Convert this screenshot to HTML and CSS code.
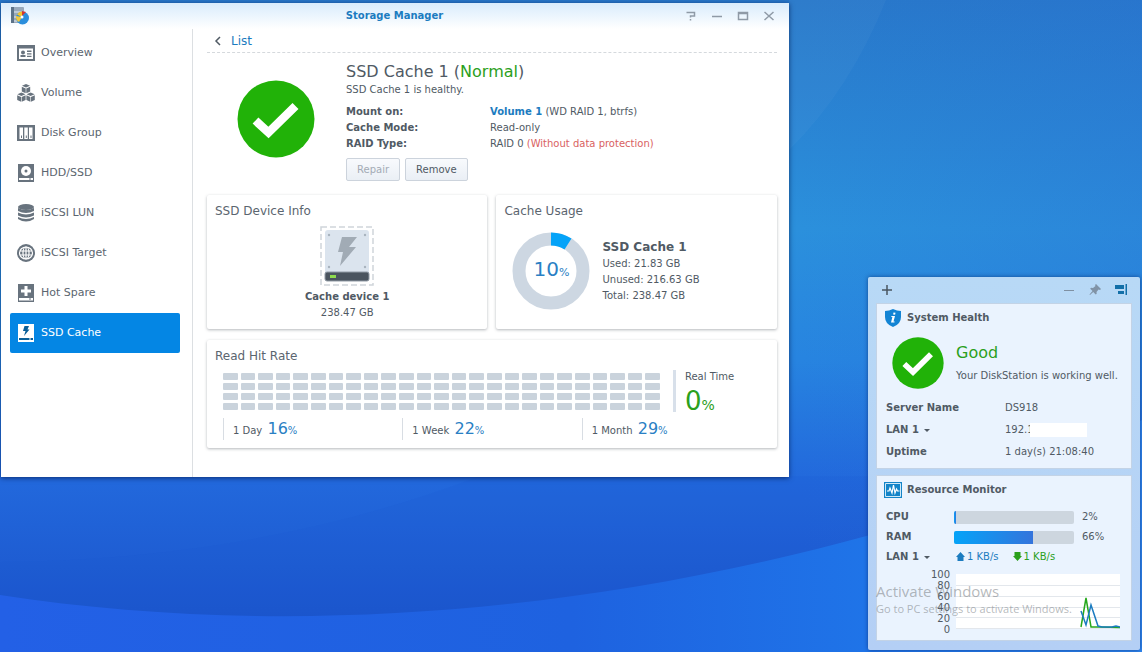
FILE: index.html
```html
<!DOCTYPE html>
<html lang="en">
<head>
    <meta charset="UTF-8">
    <meta name="viewport" content="width=device-width, initial-scale=1.0">
    <title>Storage Manager</title>
    <link rel="stylesheet" href="styles.css">
</head>
<body>
    <svg class="wallpaper" viewBox="0 0 1142 652" preserveAspectRatio="none" aria-hidden="true">
        <defs>
            <linearGradient id="sky" x1="0" y1="0" x2="0" y2="1">
                <stop offset="0" stop-color="#2878ca"/>
                <stop offset="0.35" stop-color="#2b90dc"/>
                <stop offset="0.55" stop-color="#2784e0"/>
                <stop offset="0.74" stop-color="#2268dc"/>
                <stop offset="1" stop-color="#1a50c8"/>
            </linearGradient>
            <linearGradient id="dusk" x1="0" y1="0" x2="1" y2="0">
                <stop offset="0.7" stop-color="#2a70d4" stop-opacity="0"/>
                <stop offset="1" stop-color="#2a70d4" stop-opacity="0.3"/>
            </linearGradient>
            <linearGradient id="front" x1="0" y1="0" x2="1" y2="0">
                <stop offset="0" stop-color="#2360e6"/>
                <stop offset="0.5" stop-color="#1e62e0"/>
                <stop offset="0.76" stop-color="#1f74e8"/>
                <stop offset="1" stop-color="#2f86ee"/>
            </linearGradient>
        </defs>
        <rect width="1142" height="652" fill="url(#sky)"/>
        <rect width="1142" height="652" fill="url(#dusk)"/>
        <path d="M886 0Q850 90 789 150V0z" fill="#fff" opacity="0.03"/>
        <path d="M0 562Q260 560 480 476H870V652H0Z" fill="#1d55d2" opacity="0.15"/>
        <path d="M0 595C260 635 560 620 870 535Q1030 485 1142 420V652H0Z" fill="url(#front)"/>
    </svg>

    <section class="window">
        <header class="titlebar">
            <svg class="app-icon" width="20" height="18" viewBox="0 0 20 18">
                <rect x="1" y="0" width="13" height="16" rx="1" fill="#98a9bb"/>
                <path d="M1 0h3v16H1z" fill="#5d7388"/>
                <path d="M4 5h10M4 10h10M4 14h10" stroke="#e2e9f0"/>
                <circle cx="12.500" cy="11" r="6.500" fill="#2b8edc"/>
                <path d="M12 10L6 9a6 6 0 0 0 3 6z" fill="#f3c83a"/>
                <path d="M12 10V4.500A6 6 0 0 0 7 7.500z" fill="#f4c52c"/>
                <path d="M12 9V4l4 1z" fill="#d6362d"/>
                <circle cx="12" cy="10" r="1.500" fill="#fff"/>
            </svg>
            <h1>Storage Manager</h1>
            <div class="window-buttons">
                <button type="button" aria-label="Help"><svg width="12" height="12" viewBox="0 0 12 12"><path d="M1.500 2.500h8v3.500H5.500v1.500M5.500 9v1.500"/></svg></button>
                <button type="button" aria-label="Minimize"><svg width="12" height="12" viewBox="0 0 12 12"><path d="M1 6.500h10"/></svg></button>
                <button type="button" aria-label="Maximize"><svg width="12" height="12" viewBox="0 0 12 12"><path d="M1.500 2.500h9v7h-9zM1 3.500h10"/></svg></button>
                <button type="button" aria-label="Close"><svg width="12" height="12" viewBox="0 0 12 12"><path d="M1.500 2l9 8M10.500 2l-9 8"/></svg></button>
            </div>
        </header>

        <div class="window-body">
            <nav class="sidebar">
                <a href="#overview">
                    <svg width="18" height="18" viewBox="0 0 18 18"><path d="M0 1h18v16H0z"/><path d="M2 4.500h14V15H2z" fill="#fff"/><circle cx="6" cy="8.500" r="2"/><path d="M3.500 11h5v2h-5zM10 6.500h4.500v1.500H10zM10 9.200h4.500v1.200H10zM10 11.800h4.500v1.200H10z"/></svg>
                    Overview
                </a>
                <a href="#volume">
                    <svg width="18" height="18" viewBox="0 0 18 18"><g id="cube"><path d="M9 0l4 1.800-4 1.800-4-1.800z"/><path d="M4.800 2.700l3.900 1.800v4.700l-3.900-1.800zM13.200 2.700l-3.900 1.800v4.700l3.900-1.800z"/></g><use href="#cube" x="-4.600" y="8.500"/><use href="#cube" x="4.600" y="8.500"/></svg>
                    Volume
                </a>
                <a href="#disk-group">
                    <svg width="18" height="18" viewBox="0 0 18 18"><path d="M0 1h18v16H0z"/><path d="M2.500 3.500h3.500v11.500H2.500zM7.300 3.500h3.500v11.500H7.300zM12 3.500h3.500v11.500H12z" fill="#fff"/><path d="M4 11.500h1v2.500h-1zM8.800 11.500h1v2.500h-1zM13.500 11.500h1v2.500h-1z"/></svg>
                    Disk Group
                </a>
                <a href="#hdd">
                    <svg width="18" height="18" viewBox="0 0 18 18"><path d="M1 0h16v18H1z"/><circle cx="9" cy="7" r="5" fill="#fff"/><circle cx="9" cy="7" r="1.500"/><path d="M2 14h14v2H2z" fill="#fff"/><path d="M12 14.500h2v1h-2z"/></svg>
                    HDD/SSD
                </a>
                <a href="#lun">
                    <svg width="18" height="18" viewBox="0 0 18 18"><ellipse cx="9" cy="3" rx="8" ry="3"/><path d="M1 4q8 4 16 0v3q-8 4-16 0zM1 8.500q8 4 16 0v3q-8 4-16 0zM1 13q8 4 16 0v2q-8 5-16 0z"/></svg>
                    iSCSI LUN
                </a>
                <a href="#target">
                    <svg width="18" height="18" viewBox="0 0 18 18"><circle cx="9" cy="9" r="9"/><g fill="none" stroke="#fff" stroke-width="1.200"><ellipse cx="9" cy="9" rx="6.500" ry="6"/><ellipse cx="9" cy="9" rx="3" ry="6"/><path d="M9 3v12M3 7h12M3 11h12"/></g></svg>
                    iSCSI Target
                </a>
                <a href="#spare">
                    <svg width="18" height="18" viewBox="0 0 18 18"><path d="M1 0h16v18H1z"/><path d="M7.500 2h3v3.500H14v3h-3.500V12h-3V8.500H4v-3h3.500zM2 14h14v2.500H2z" fill="#fff"/><path d="M12 14.500h2v1h-2z"/></svg>
                    Hot Spare
                </a>
                <a href="#cache" class="active">
                    <svg width="18" height="18" viewBox="0 0 18 18"><path d="M1 0h16v18H1z"/><path d="M7.500 2h4.500l-1.500 3.500H12.500L7 12l1.500-5H6zM2 14h14v2H2z" fill="#0a5f98"/><path d="M12 14.500h2v1h-2z"/></svg>
                    SSD Cache
                </a>
            </nav>

            <main class="content">
                <div class="crumb">
                    <svg width="8" height="10" viewBox="0 0 8 10"><path d="M6 1L2 5l4 4" fill="none" stroke="#505a64" stroke-width="1.500"/></svg>
                    <a href="#list">List</a>
                </div>

                <section class="summary">
                    <svg class="status-icon" width="78" height="78" viewBox="0 0 78 78"><circle cx="39" cy="39" r="38.500" fill="#21b208"/><path d="M18.500 40.500l13 12 27-26.500" fill="none" stroke="#fff" stroke-width="8.500"/></svg>
                    <div class="summary-text">
                        <h2>SSD Cache 1 (<span class="green">Normal</span>)</h2>
                        <p>SSD Cache 1 is healthy.</p>
                        <dl>
                            <dt>Mount on:</dt>
                            <dd><a href="#volume">Volume 1</a> (WD RAID 1, btrfs)</dd>
                            <dt>Cache Mode:</dt>
                            <dd>Read-only</dd>
                            <dt>RAID Type:</dt>
                            <dd>RAID 0 <span class="red">(Without data protection)</span></dd>
                        </dl>
                        <div class="buttons">
                            <button type="button" disabled>Repair</button>
                            <button type="button">Remove</button>
                        </div>
                    </div>
                </section>

                <div class="cards">
                    <section class="card device">
                        <h3>SSD Device Info</h3>
                        <svg width="54" height="60" viewBox="0 0 54 60">
                            <rect x="1" y="1" width="52" height="58" fill="none" stroke="#d0d5da" stroke-width="1.500" stroke-dasharray="6 3"/>
                            <rect x="5" y="4" width="44" height="48" rx="3" fill="#dbe4ee"/>
                            <g fill="#a8b3be"><circle cx="9" cy="9" r="1.200"/><circle cx="45" cy="9" r="1.200"/><circle cx="9" cy="41" r="1.200"/><circle cx="45" cy="41" r="1.200"/></g>
                            <path d="M22 11h15l-8 10h7L20 40l3-14h-5z" fill="#a1abb5"/>
                            <rect x="5" y="46" width="44" height="9" rx="2" fill="#4a545f" stroke="#919ba6"/>
                            <rect x="10" y="49" width="6" height="3" fill="#8edb4e"/>
                        </svg>
                        <strong>Cache device 1</strong>
                        <span>238.47 GB</span>
                    </section>

                    <section class="card usage">
                        <h3>Cache Usage</h3>
                        <div class="usage-row">
                            <div class="donut">
                                <svg width="78" height="78" viewBox="0 0 78 78"><circle cx="39" cy="39" r="32" fill="none" stroke="#cdd7e2" stroke-width="13"/><path d="M39 7A32 32 0 0 1 56 12" fill="none" stroke="#05a3f8" stroke-width="13"/></svg>
                                <p class="percent">10<small>%</small></p>
                            </div>
                            <div>
                                <strong>SSD Cache 1</strong>
                                <p>Used: 21.83 GB</p>
                                <p>Unused: 216.63 GB</p>
                                <p>Total: 238.47 GB</p>
                            </div>
                        </div>
                    </section>

                    <section class="card hitrate">
                        <h3>Read Hit Rate</h3>
                        <div class="hit-row">
                            <div class="hit-grid" id="hit-grid"></div>
                            <div class="realtime">
                                <p>Real Time</p>
                                <p class="percent">0<small>%</small></p>
                            </div>
                        </div>
                        <div class="periods">
                            <p>1 Day <span class="percent">16<small>%</small></span></p>
                            <p>1 Week <span class="percent">22<small>%</small></span></p>
                            <p>1 Month <span class="percent">29<small>%</small></span></p>
                        </div>
                    </section>
                </div>
            </main>
        </div>
    </section>

    <aside class="widgets">
        <header class="widget-bar">
            <button type="button" aria-label="Add widget"><svg width="12" height="12" viewBox="0 0 12 12"><path d="M6 1v10M1 6h10" stroke="#4a5560" stroke-width="1.500"/></svg></button>
            <button type="button" class="push" aria-label="Minimize widgets"><svg width="12" height="12" viewBox="0 0 12 12"><path d="M1 6.500h10" stroke="#7f90a2"/></svg></button>
            <button type="button" aria-label="Pin"><svg width="12" height="12" viewBox="0 0 12 12"><path d="M7 0l5 5-1 1-1.500-.5L7.500 8l.2 1.700-1 .8-2.500-2.500L1 11l-.5-.5L3.500 7 1.200 4.800l.8-1 2 .2L6.500 2 6 1z" fill="#8193a6"/></svg></button>
            <button type="button" aria-label="Dock"><svg width="12" height="12" viewBox="0 0 12 12"><path d="M0 1h9v4H0zM3 7h6v3H3zM10.500 0h1.500v11h-1.500z" fill="#126fa8"/></svg></button>
        </header>

        <section class="widget">
            <h2>
                <svg width="18" height="18" viewBox="0 0 18 18"><path d="M9 0q4 2 8 2v6q0 7-8 10Q1 15 1 8V2q4 0 8-2z" fill="#1384d4"/><path d="M9.500 3.500l2 .2-.4 2-2-.2zM7.500 7h3.500l-1.500 5.500h1.200l-.3 1H7l1.400-5.500H7.200z" fill="#fff"/></svg>
                System Health
            </h2>
            <div class="health">
                <svg width="52" height="52" viewBox="0 0 78 78"><circle cx="39" cy="39" r="38.500" fill="#21b208"/><path d="M18.500 40.500l13 12 27-26.500" fill="none" stroke="#fff" stroke-width="8.500"/></svg>
                <div>
                    <h3>Good</h3>
                    <p>Your DiskStation is working well.</p>
                </div>
            </div>
            <dl class="facts">
                <dt>Server Name</dt>
                <dd>DS918</dd>
                <dt><button type="button">LAN 1 <i class="caret"></i></button></dt>
                <dd>192.1<span class="blank"></span></dd>
                <dt>Uptime</dt>
                <dd>1 day(s) 21:08:40</dd>
            </dl>
        </section>

        <section class="widget">
            <h2>
                <svg width="18" height="18" viewBox="0 0 18 18"><path d="M0 1h18v16H0z" fill="#1384c8"/><path d="M1.500 2.500h15v13h-15z" fill="none" stroke="#cfe8f7"/><path d="M3 10h2l1-3 2 5 1.500-8 1.500 8 1.500-4 1 2h2" fill="none" stroke="#fff" stroke-width="1.200"/></svg>
                Resource Monitor
            </h2>
            <div class="meter">
                <b>CPU</b>
                <div class="bar"><div class="fill" style="width: 2%"></div></div>
                <span>2%</span>
            </div>
            <div class="meter">
                <b>RAM</b>
                <div class="bar"><div class="fill" style="width: 66%"></div></div>
                <span>66%</span>
            </div>
            <div class="meter">
                <button type="button">LAN 1 <i class="caret"></i></button>
                <span class="up"><svg width="9" height="10" viewBox="0 0 9 10"><path d="M4.500 0L9 5H7.500v4h-6V5H0z"/></svg> 1 KB/s</span>
                <span class="down"><svg width="9" height="10" viewBox="0 0 9 10"><path d="M4.500 9L0 4h1.500V0h6v4H9z"/></svg> 1 KB/s</span>
            </div>
            <div class="chart">
                <ul>
                    <li>100</li>
                    <li>80</li>
                    <li>60</li>
                    <li>40</li>
                    <li>20</li>
                    <li>0</li>
                </ul>
                <svg viewBox="0 0 164 55" preserveAspectRatio="none">
                    <path d="M0 0h164v55H0z" fill="#fff"/>
                    <path d="M0 11.500h164M0 22.500h164M0 33.500h164M0 43.500h164M0 54.500h164" stroke="#e3e7ec"/>
                    <g fill="none" stroke-width="1.500">
                        <path d="M125 53l5-29 5 29h8l21 .5" stroke="#28a81c"/>
                        <path d="M125 37l5 14 5-20 7 21 4 1h10l4-1 4 1" stroke="#1c7cc0"/>
                    </g>
                </svg>
            </div>
        </section>
    </aside>

    <div class="activate">
        <p class="activate-title">Activate Windows</p>
        <p>Go to PC settings to activate Windows.</p>
    </div>

    <script>
        // 4 rows of 25 samples
        var grid = document.getElementById("hit-grid");
        for (var i = 0; i < 100; i++) {
            grid.appendChild(document.createElement("span"));
        }
    </script>
</body>
</html>
```
FILE: styles.css
```css
* {
    box-sizing: border-box;
}
body {
    margin: 0;
    min-height: 100vh;
    position: relative;
    overflow: hidden;
    background: #2264d8;
    font-family: "DejaVu Sans", Verdana, sans-serif;
    font-size: 10px;
    line-height: 16px;
    color: #505a64;
}
h1, h2, h3, p, dl, dd, ul {
    margin: 0;
    padding: 0;
}
a {
    color: #1c7cc0;
    text-decoration: none;
}
button {
    font: inherit;
    color: inherit;
    border: 0;
    padding: 0;
    background: none;
}
svg {
    display: block;
    flex: none;
}
.wallpaper {
    position: absolute;
    width: 100%;
    height: 100%;
}
.green {
    color: #2ba01c;
}
.red {
    color: #d9625f;
}

/* storage manager window */
.window {
    position: absolute;
    left: 1px;
    top: 3px;
    width: 69%;
    background: #fff;
    box-shadow: 0 1px 5px rgba(0, 20, 70, 0.7);
}
.titlebar {
    display: flex;
    align-items: center;
    height: 26px;
    padding: 0 14px 0 9px;
    background: linear-gradient(#d9ecfc, #fff);
}
.titlebar h1 {
    flex: 1;
    padding-left: 74px;
    text-align: center;
    font-size: 10px;
    color: #1c7cc0;
}
.window-buttons {
    display: flex;
    gap: 14px;
}
.window-buttons svg {
    fill: none;
    stroke: #8f9aa6;
    stroke-width: 1.5;
}
.window-body {
    display: flex;
}
.sidebar {
    width: 192px;
    padding: 4px 12px 124px 9px;
    border-right: 1px solid #dcdfe2;
}
.sidebar a {
    display: flex;
    align-items: center;
    gap: 6px;
    height: 40px;
    padding-left: 7px;
    border-radius: 2px;
    font-size: 11px;
    color: #5b656f;
}
.sidebar svg {
    fill: #68737e;
}
.sidebar .active {
    background: #0486e4;
    color: #fff;
}
.sidebar .active svg {
    fill: #fff;
}
.content {
    flex: 1;
    padding: 0 12px 0 14px;
}
.crumb {
    display: flex;
    align-items: center;
    gap: 9px;
    height: 24px;
    padding-left: 7px;
    border-bottom: 1px dashed #d5d9dd;
    font-size: 12px;
}
.summary {
    display: flex;
    gap: 31px;
    padding: 9px 0 14px 30px;
}
.status-icon {
    margin-top: 18px;
}
.summary h2 {
    font-size: 16px;
    line-height: 20px;
    font-weight: normal;
}
.summary dl {
    display: grid;
    grid-template-columns: 144px 1fr;
    margin-top: 6px;
}
dt, .summary dd a {
    font-weight: bold;
}
.buttons {
    display: flex;
    gap: 5px;
    margin-top: 6px;
}
.buttons button {
    height: 23px;
    padding: 0 10px;
    border: 1px solid #ccd3dc;
    border-radius: 2px;
    background: linear-gradient(#f8fafd, #eaeff5);
}
.buttons button:disabled {
    color: #a3abb5;
}

/* cards */
.cards {
    display: grid;
    grid-template-columns: 1fr 1fr;
    gap: 11px 9px;
}
.card {
    height: 134px;
    padding: 8px;
    border-radius: 2px;
    box-shadow: 0 1px 3px rgba(40, 50, 60, 0.35);
}
.card h3 {
    font-size: 12px;
    font-weight: normal;
    color: #5b656f;
}
.device {
    display: flex;
    flex-direction: column;
    align-items: center;
}
.device h3 {
    align-self: flex-start;
}
.device svg {
    margin: 7px 0 3px;
}
.usage-row {
    display: flex;
    align-items: center;
    gap: 12px;
    padding: 13px 0 0 8px;
}
.usage strong {
    font-size: 12px;
}
.percent, .percent small {
    color: #2a80c4;
}
.percent small {
    font-size: 10px;
}
/* the figure is stacked over the ring */
.donut {
    display: grid;
    place-items: center;
}
.donut > * {
    grid-area: 1 / 1;
}
.donut .percent {
    font-size: 20px;
}
.donut small {
    font-size: 11px;
}
.hitrate {
    grid-column: 1 / 3;
    height: 108px;
}
.hit-row {
    display: flex;
    justify-content: space-between;
    padding: 6px 0 0 8px;
}
.hit-grid {
    flex: 1;
    display: grid;
    grid-template-columns: repeat(25, 1fr);
    gap: 3px;
    align-self: flex-start;
    padding-top: 3px;
}
.hit-grid span {
    height: 7px;
    border-radius: 1px;
    background: #cad3dc;
}
.realtime {
    width: 96px;
    height: 42px;
    margin-left: 13px;
    padding-left: 9px;
    border-left: 3px solid #d8e0ea;
}
.realtime p {
    line-height: 14px;
}
.realtime .percent {
    margin-top: 4px;
    font-size: 26px;
    line-height: 26px;
    color: #2ba01c;
}
.realtime small {
    font-size: 14px;
    color: #2ba01c;
}
.periods {
    display: flex;
    padding: 6px 8px 0 8px;
}
.periods p {
    flex: 1;
    padding-left: 9px;
    border-left: 1px solid #d8dde3;
    line-height: 22px;
    height: 22px;
}
.periods .percent {
    margin-left: 2px;
    font-size: 16px;
}

/* widget panel */
.widgets {
    position: absolute;
    right: 2px;
    bottom: 2px;
    width: 272px;
    padding: 0 8px 9px;
    border-radius: 2px;
    background: linear-gradient(#b8d9f6, #b4cff5);
    box-shadow: 0 0 4px rgba(0, 30, 100, 0.6);
}
.widget-bar {
    display: flex;
    align-items: center;
    gap: 14px;
    height: 26px;
    padding: 0 5px;
}
.push {
    margin-left: auto;
}
.widget {
    height: 166px;
    padding: 5px 7px 0;
    border: 1px solid #c3d3e6;
    background: #eaf3fe;
}
.widget + .widget {
    margin-top: 6px;
}
.widget h2 {
    display: flex;
    align-items: center;
    gap: 5px;
    font-size: 10px;
    line-height: 18px;
}
.health {
    display: flex;
    gap: 12px;
    padding: 10px 0 8px 8px;
}
.health h3 {
    margin-top: 6px;
    font-size: 16px;
    line-height: 20px;
    font-weight: normal;
    color: #2ba01c;
}
.health p {
    margin-top: 5px;
}
.facts {
    display: grid;
    grid-template-columns: 119px 1fr;
    line-height: 22px;
    padding-left: 2px;
}
.facts button, .meter button {
    font-weight: bold;
}
.facts dd {
    display: flex;
    align-items: center;
}
.caret {
    display: inline-block;
    margin-left: 2px;
    border: 3px solid transparent;
    border-top-color: #505a64;
    border-bottom: 0;
    vertical-align: middle;
}
.blank {
    width: 57px;
    height: 14px;
    margin-left: -4px;
    background: #fff;
}
.meter {
    display: flex;
    align-items: center;
    height: 20px;
    padding-left: 2px;
}
h2 + .meter {
    margin-top: 8px;
}
.meter b, .meter button {
    width: 68px;
    text-align: left;
}
.bar {
    width: 120px;
    height: 13px;
    margin-right: 8px;
    border-radius: 2px;
    background: #cdd6df;
    overflow: hidden;
}
.fill {
    height: 100%;
    background: linear-gradient(90deg, #05a3f8, #3474dc);
}
.up, .down {
    display: flex;
    align-items: center;
    gap: 2px;
    margin: 0 14px 0 2px;
    color: #1c7cc0;
    fill: #1c7cc0;
}
.down {
    margin: 0;
    color: #2ba01c;
    fill: #2ba01c;
}
.chart {
    display: flex;
    gap: 6px;
    padding-right: 4px;
}
.chart ul {
    width: 66px;
    list-style: none;
    text-align: right;
    line-height: 11px;
    margin-top: 2px;
}
.chart svg {
    flex: 1;
    min-width: 0;
    height: 55px;
    margin-top: 7px;
}

/* desktop watermark, drawn over the widgets */
.activate {
    position: absolute;
    right: 61px;
    bottom: 35px;
    width: 205px;
    font: 11px/16px "Open Sans", sans-serif;
    white-space: nowrap;
    color: rgba(120, 125, 130, 0.55);
}
.activate .activate-title {
    font-size: 15px;
    line-height: 20px;
}
```
